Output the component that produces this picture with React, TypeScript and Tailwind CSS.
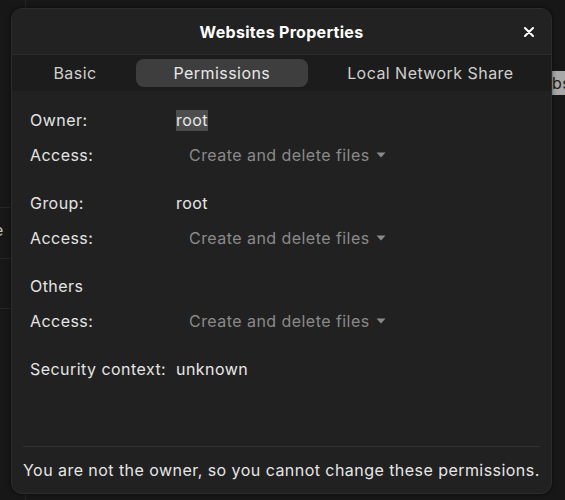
import React from 'react'

const rows = [
  { label: 'Owner:', value: 'root', selected: true },
  { label: 'Access:', dropdown: 'Create and delete files' },
  { label: 'Group:', value: 'root', gap: true },
  { label: 'Access:', dropdown: 'Create and delete files' },
  { label: 'Others', gap: true },
  { label: 'Access:', dropdown: 'Create and delete files' },
  { label: 'Security context:', value: 'unknown', gap: true },
]

const tabs = ['Basic', 'Permissions', 'Local Network Share']

function CaretDown() {
  return (
    <svg width="10" height="6" viewBox="0 0 10 6" className="ml-[6px] mt-[1px]">
      <path d="M0.5 0.5 L9.5 0.5 L5 5.5 Z" fill="#8a8a8a" />
    </svg>
  )
}

function CloseIcon() {
  return (
    <svg width="10" height="10" viewBox="0 0 10 10">
      <path d="M1 1 L9 9 M9 1 L1 9" stroke="#ffffff" strokeWidth="2" strokeLinecap="round" />
    </svg>
  )
}

export default function App() {
  return (
    <div
      className="relative w-[565px] h-[500px] overflow-hidden bg-[#171717] text-[16px] tracking-[0.45px]"
      style={{ fontFamily: 'Inter, "Noto Sans", sans-serif' }}
    >
      {/* window behind the dialog */}
      <div className="absolute left-[25px] top-0 h-full w-px bg-[#242424]" />
      <div className="absolute left-0 top-[207px] w-[12px] h-px bg-[#262626]" />
      <div className="absolute left-0 top-[258px] w-[12px] h-px bg-[#262626]" />
      <div className="absolute left-0 top-[308px] w-[12px] h-px bg-[#262626]" />
      <div className="absolute left-[-6px] top-[219px] text-[#bdbdbd] leading-[22px]">e</div>
      <div className="absolute left-[551px] top-[71px] w-[20px] h-[24px] bg-[#a8a8a8] text-[#1e1e1e] leading-[24px] pl-[1px]">
        bs
      </div>

      {/* dialog */}
      <div className="absolute left-[11px] top-[8px] w-[541px] h-[486px] rounded-[11px] border border-[#2c2c2c] bg-[#212121] overflow-hidden flex flex-col shadow-[0_0_4px_rgba(0,0,0,0.6)]">
        <div className="relative h-[46px] shrink-0 flex items-center justify-center bg-[#222222] border-b border-[#2a2a2a]">
          <span className="font-bold text-white tracking-[0.3px]">Websites Properties</span>
          <button className="absolute right-[12px] top-[13px] w-[20px] h-[20px] flex items-center justify-center">
            <CloseIcon />
          </button>
        </div>

        <div className="h-[36px] shrink-0 flex items-center bg-[#1c1c1c] pl-[4px]">
          {tabs.map((t) => (
            <div
              key={t}
              className={
                t === 'Permissions'
                  ? 'flex-auto h-[28px] mx-[2px] rounded-[8px] bg-[#3e3e3e] text-[#e8e8e8] flex items-center justify-center'
                  : 'flex-auto h-[28px] flex items-center justify-center text-[#cfcfcf]'
              }
            >
              {t}
            </div>
          ))}
        </div>

        <div className="flex-1 px-[18px] pt-[11px]">
          {rows.map((r, i) => (
            <div
              key={i}
              className={
                r.gap
                  ? 'grid grid-cols-[146px_1fr] items-center h-[35px] mt-[13px]'
                  : 'grid grid-cols-[146px_1fr] items-center h-[35px]'
              }
            >
              <span className="text-[#e4e4e4]">{r.label}</span>
              {r.value && (
                <span className="text-[#e8e8e8]">
                  <span className={r.selected ? 'bg-[#4d4d4d] inline-block leading-[21px]' : 'inline-block leading-[21px]'}>
                    {r.value}
                  </span>
                </span>
              )}
              {r.dropdown && (
                <span className="flex items-center pl-[13px] text-[#8a8a8a]">
                  {r.dropdown}
                  <CaretDown />
                </span>
              )}
            </div>
          ))}
        </div>

        <div className="mx-[11px] h-px bg-[#303030]" />
        <div className="h-[46px] shrink-0 flex items-center px-[11px] text-[#e6e6e6] whitespace-nowrap">
          You are not the owner, so you cannot change these permissions.
        </div>
      </div>
    </div>
  )
}
